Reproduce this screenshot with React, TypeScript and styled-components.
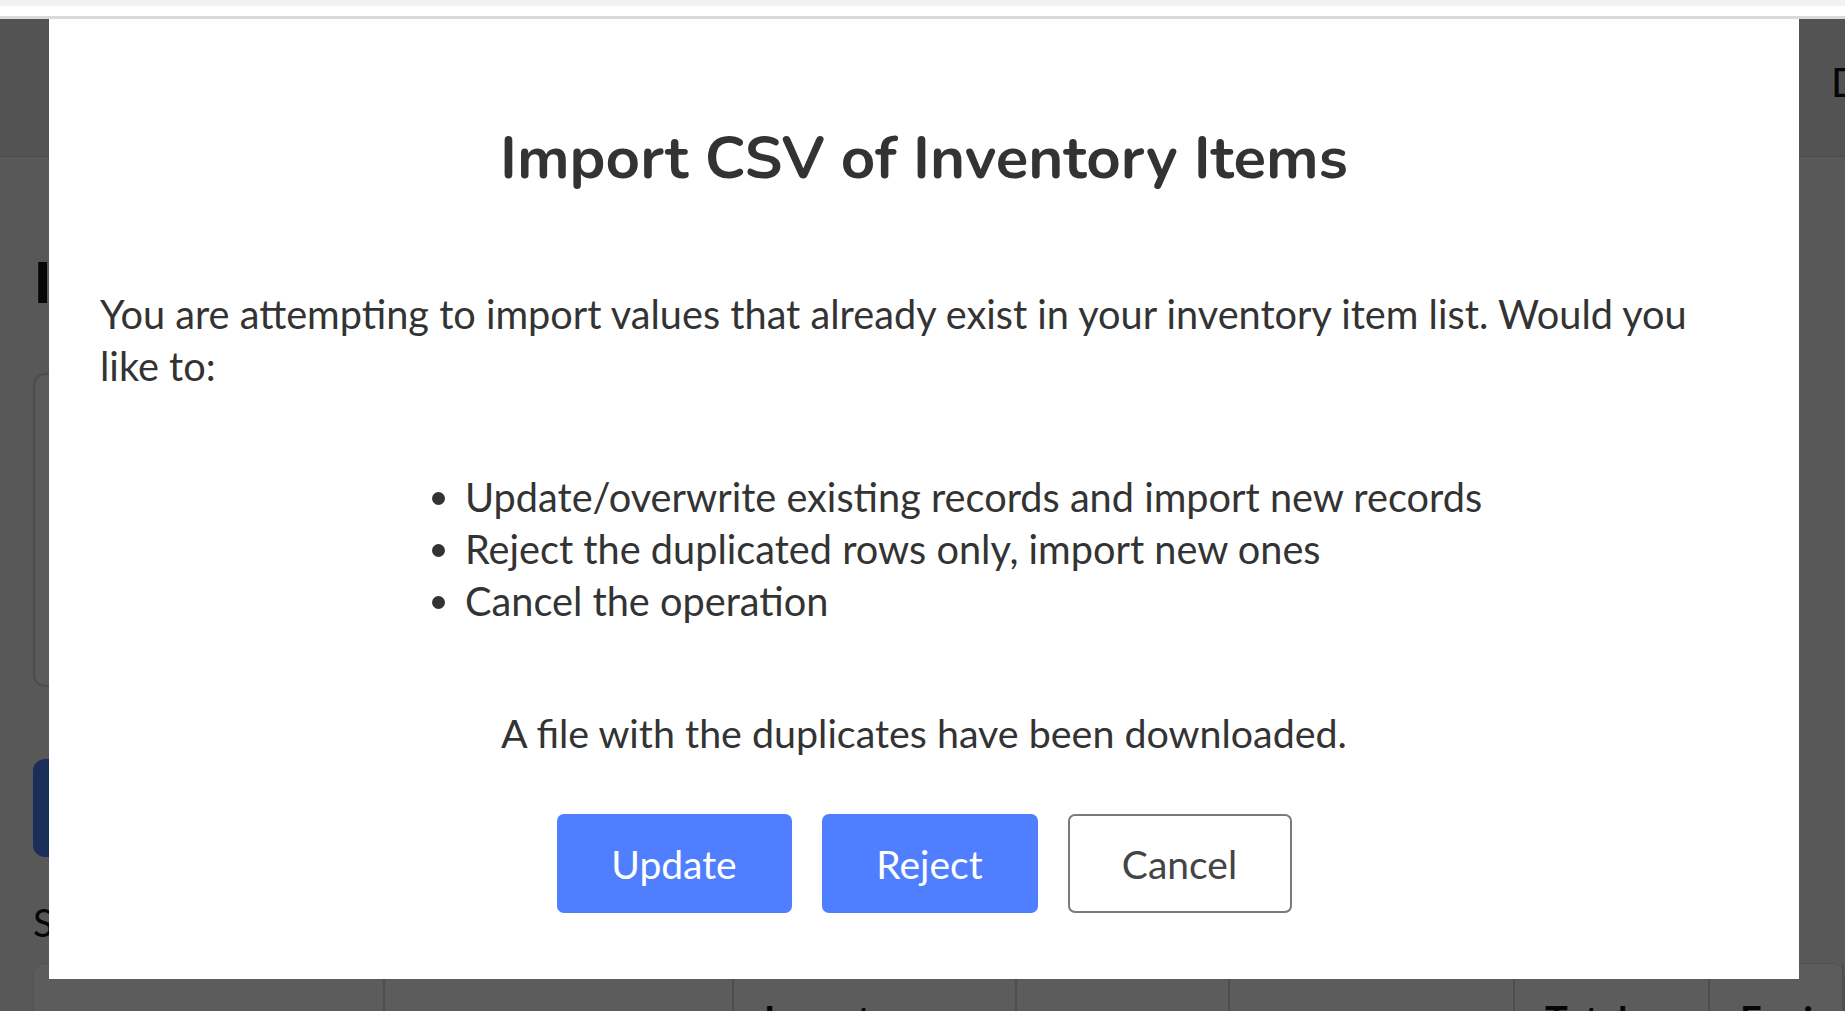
import React from 'react';
import styled, { createGlobalStyle } from 'styled-components';

const GlobalStyle = createGlobalStyle`
	html, body {
		margin: 0;
		padding: 0;
		width: 1845px;
		height: 1011px;
		overflow: hidden;
		background: #ffffff;
		font-family: 'Lato', 'Open Sans', sans-serif;
	}
	* {
		box-sizing: border-box;
	}
`;

// 브라우저 상단 띠
const StyledTopStrip = styled.div`
	height: 19px;
	background-color: #ffffff;
	border-top: solid 6px #f1f2f4;
	border-bottom: solid 3px #d9dadc;
`;

// 모달 뒤의 페이지
const StyledPage = styled.div`
	position: relative;
	height: 992px;
	overflow: hidden;
	background-color: #f3f3f3;
`;

const StyledHeader = styled.header`
	display: flex;
	justify-content: flex-end;
	align-items: center;
	height: 138px;
	background-color: #e6e6e6;
	border-bottom: solid 1px #d0d0d0;
	overflow: hidden;
`;

const StyledUserName = styled.span`
	width: 14px;
	overflow: hidden;
	font-size: 40px;
	color: #111111;
	white-space: nowrap;
	margin-top: -12px;
`;

const StyledContent = styled.main`
	display: flex;
	flex-direction: column;
	padding: 84px 0 0 33px;
`;

const StyledPageTitle = styled.h1`
	margin: 0;
	font-family: 'Open Sans', sans-serif;
	font-size: 58px;
	font-weight: 700;
	line-height: 80px;
	color: #111111;
	white-space: nowrap;
`;

const StyledUploadCard = styled.div`
	margin-top: 52px;
	height: 314px;
	width: 900px;
	border: solid 2px #d2d2d2;
	border-radius: 12px;
	background-color: #fafafa;
`;

const StyledUploadButton = styled.div`
	margin-top: 72px;
	width: 320px;
	height: 98px;
	border-radius: 12px;
	background-color: #4c80f8;
`;

const StyledSearchLabel = styled.div`
	margin-top: 40px;
	font-size: 38px;
	line-height: 50px;
	color: #111111;
`;

const StyledTable = styled.div`
	display: grid;
	grid-template-columns: 351px 349px 283px 213px 285px 195px 1fr;
	margin-top: 16px;
	height: 120px;
	border-radius: 12px 12px 0 0;
	background-color: #ffffff;
	border: solid 1px #e0e0e0;
`;

const StyledTableHead = styled.div`
	padding: 32px 0 0 30px;
	border-right: solid 2px #d8d8d8;
	font-size: 38px;
	font-weight: 700;
	line-height: 46px;
	color: #111111;
	white-space: nowrap;
	overflow: hidden;
`;

// 오버레이 + 모달
const StyledOverlay = styled.div`
	position: fixed;
	top: 19px;
	left: 0;
	right: 0;
	bottom: 0;
	display: flex;
	align-items: flex-start;
	padding-left: 49px;
	background-color: rgba(0, 0, 0, 0.64);
`;

const StyledModal = styled.div`
	display: flex;
	flex-direction: column;
	align-items: center;
	width: 1750px;
	padding: 106px 51px 66px;
	background-color: #ffffff;
	color: #333333;
`;

const StyledModalTitle = styled.h2`
	margin: 0;
	font-family: 'Nunito', 'Open Sans', sans-serif;
	font-size: 60px;
	font-weight: 700;
	line-height: 67px;
	color: #333333;
`;

const StyledMessage = styled.p`
	align-self: stretch;
	margin: 96px 0 0;
	font-size: 39.7px;
	line-height: 52px;
`;

const StyledOptionList = styled.ul`
	align-self: stretch;
	margin: 79px 0 0 325px;
	padding-left: 40px;
	font-size: 39.7px;
	line-height: 52px;
`;

const StyledNotice = styled.p`
	margin: 80px 0 0;
	font-size: 39.4px;
	line-height: 52px;
`;

const StyledButtonRow = styled.div`
	display: flex;
	gap: 30px;
	margin-top: 55px;
`;

const StyledButton = styled.button<{ $primary?: boolean; $width: number }>`
	width: ${({ $width }) => $width}px;
	height: 99px;
	border-radius: 7px;
	border: solid 2px ${({ $primary }) => ($primary ? '#4f7fff' : '#7a7a7a')};
	background-color: ${({ $primary }) => ($primary ? '#4f7fff' : '#ffffff')};
	color: ${({ $primary }) => ($primary ? '#ffffff' : '#444444')};
	font-family: 'Lato', sans-serif;
	font-size: 39px;
	cursor: pointer;
`;

const tableHeads = ['', '', 'Inventory', '', '', 'Total', 'Expiry'];

const App = () => {
	return (
		<>
			<GlobalStyle />
			<StyledTopStrip />
			<StyledPage>
				<StyledHeader>
					<StyledUserName>Demo</StyledUserName>
				</StyledHeader>
				<StyledContent>
					<StyledPageTitle>Inventory Items</StyledPageTitle>
					<StyledUploadCard />
					<StyledUploadButton />
					<StyledSearchLabel>Search</StyledSearchLabel>
					<StyledTable>
						{tableHeads.map((head, i) => (
							<StyledTableHead key={i}>{head}</StyledTableHead>
						))}
					</StyledTable>
				</StyledContent>
				<StyledOverlay>
					<StyledModal>
						<StyledModalTitle>Import CSV of Inventory Items</StyledModalTitle>
						<StyledMessage>
							You are attempting to import values that already exist in your inventory item list. Would you
							like to:
						</StyledMessage>
						<StyledOptionList>
							<li>Update/overwrite existing records and import new records</li>
							<li>Reject the duplicated rows only, import new ones</li>
							<li>Cancel the operation</li>
						</StyledOptionList>
						<StyledNotice>A file with the duplicates have been downloaded.</StyledNotice>
						<StyledButtonRow>
							<StyledButton $primary $width={235}>
								Update
							</StyledButton>
							<StyledButton $primary $width={216}>
								Reject
							</StyledButton>
							<StyledButton $width={224}>Cancel</StyledButton>
						</StyledButtonRow>
					</StyledModal>
				</StyledOverlay>
			</StyledPage>
		</>
	);
};

export default App;
